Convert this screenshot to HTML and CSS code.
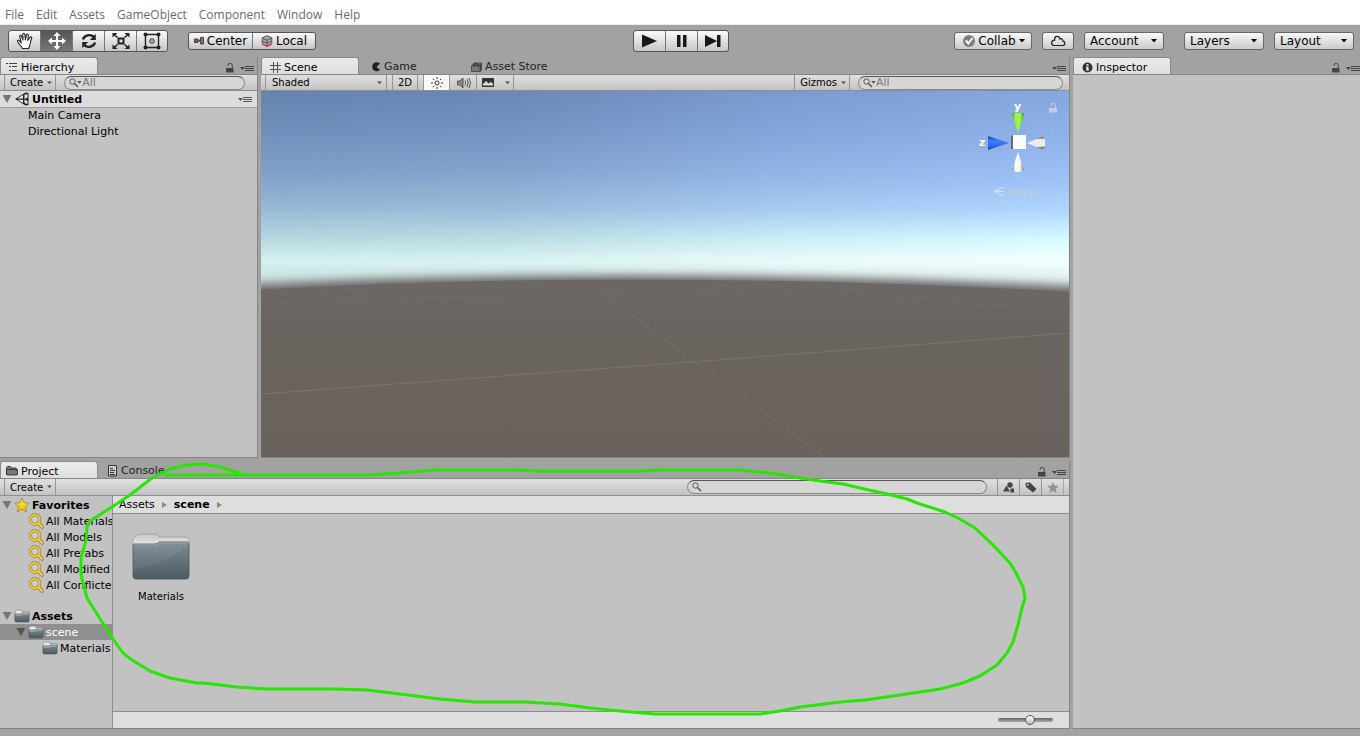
FILE: index.html
```html
<!DOCTYPE html>
<html lang="en">
<head>
    <meta charset="UTF-8">
    <meta name="viewport" content="width=device-width, initial-scale=1.0">
    <title>Untitled - Scene Editor</title>
    <link rel="stylesheet" href="styles.css">
</head>
<body>
    <!-- shared icons -->
    <svg class="sprite" width="0" height="0" aria-hidden="true">
        <defs>
            <linearGradient id="folderFront" x1="0" y1="0" x2="0" y2="1">
                <stop offset="0" stop-color="#7b8b92"/>
                <stop offset="1" stop-color="#4c5b62"/>
            </linearGradient>
            <linearGradient id="folderBack" x1="0" y1="0" x2="0" y2="1">
                <stop offset="0" stop-color="#c4c4c4"/>
                <stop offset="1" stop-color="#f2f2f2"/>
            </linearGradient>
            <linearGradient id="gold" x1="0" y1="0" x2="0" y2="1">
                <stop offset="0" stop-color="#fff04a"/>
                <stop offset="1" stop-color="#f5b70a"/>
            </linearGradient>
        </defs>
        <symbol id="lock" viewBox="0 0 8 10">
            <path d="M2 3V2.500a2 2 0 0 1 4.300 0V5" fill="none" stroke="currentColor"/>
            <path d="M0 5h7.500v4.500H0z" fill="currentColor"/>
        </symbol>
        <symbol id="menu" viewBox="0 0 14 7">
            <path d="M0 2h5L2.500 5z" fill="currentColor"/>
            <path d="M5 1.500h9M5 3.500h9M5 5.500h9" stroke="currentColor"/>
        </symbol>
        <symbol id="down" viewBox="0 0 6 4">
            <path d="M0 0h6L3 3.500z" fill="currentColor"/>
        </symbol>
        <symbol id="twisty" viewBox="0 0 10 8">
            <path d="M.5 0h9L5 8z" fill="currentColor"/>
        </symbol>
        <symbol id="find" viewBox="0 0 10 10">
            <circle cx="3.500" cy="3.500" r="2.700" fill="none" stroke="currentColor"/>
            <path d="M5.500 5.500L9 9" stroke="currentColor" stroke-width="1.500"/>
        </symbol>
        <symbol id="magnifier" viewBox="0 0 16 16">
            <circle cx="7" cy="6.500" r="4.700" fill="none" stroke="#8c7a3c" stroke-width="3"/>
            <path d="M10.500 10.500L14 14" stroke="#8c7a3c" stroke-width="3.600" stroke-linecap="round"/>
            <circle cx="7" cy="6.500" r="4.700" fill="none" stroke="#f9d62f" stroke-width="1.700"/>
            <path d="M10.500 10.500L14 14" stroke="#f9cf22" stroke-width="2.200" stroke-linecap="round"/>
            <circle cx="7" cy="6.500" r="3.500" fill="#cfcfcf" stroke="#8c7a3c" stroke-width=".6"/>
        </symbol>
        <symbol id="folder" viewBox="0 0 16 14">
            <path d="M1 12V3q0-1 .7-1L2.500 1H7l1 1.500h6q1 0 1 1V12z" fill="#e6e6e6" stroke="#777" stroke-width=".6"/>
            <path d="M1 5h6l1-1h7v8q0 1-1 1H2q-1 0-1-1z" fill="url(#folderFront)" stroke="#4c5960" stroke-width=".6"/>
            <path d="M1.500 6h6l1-1h6" fill="none" stroke="#c6ced2" stroke-width=".8"/>
        </symbol>
    </svg>

    <nav class="menu-bar">
        <a href="#">File</a>
        <a href="#">Edit</a>
        <a href="#">Assets</a>
        <a href="#">GameObject</a>
        <a href="#">Component</a>
        <a href="#">Window</a>
        <a href="#">Help</a>
    </nav>

    <header class="toolbar">
        <div class="toolbar-left">
            <div class="button-group tools">
                <button aria-label="Hand">
                    <svg width="18" height="18" viewBox="0 0 18 18" fill="#fff" stroke="#222" stroke-width="1.100" stroke-linejoin="round"><path d="M6.500 16.500C5 14 2.500 11.500 1.500 9.500c-.4-1.200 1-1.700 1.800-.8L5.300 11 3.700 4.500c-.3-1.400 1.400-1.800 1.800-.5L7 8 6.800 2.300c0-1.400 1.900-1.400 2 0L9.400 8l1-5c.3-1.300 2-1 1.900.3L11.800 8.500 14 5.300c.8-1 2.200-.2 1.700 1L14.500 10c-.5 3-1 4.500-2 6.500z"/></svg>
                </button>
                <button class="on" aria-label="Move">
                    <svg width="18" height="18" viewBox="0 0 18 18" fill="#fff"><path d="M9 0l3.500 4H10v4h4V5.500L18 9l-4 3.500V10h-4v4h2.500L9 18l-3.500-4H8v-4H4v2.500L0 9l4-3.500V8h4V4H5.500z"/></svg>
                </button>
                <button aria-label="Rotate">
                    <svg width="18" height="16" viewBox="0 0 18 16" fill="none" stroke="#222" stroke-width="2.400"><path d="M3 6.500C4 2 10.500.8 14 4M15 9.500C14 14 7.500 15.200 4 12"/><path d="M15.800 1v6h-6zM2.200 15V9h6z" fill="#222" stroke="none"/></svg>
                </button>
                <button aria-label="Scale">
                    <svg width="18" height="16" viewBox="0 0 18 16" fill="none" stroke="#222"><path d="M6.500 5.500h5v5h-5z" stroke-width="2"/><path d="M5.500 4.500L2 1.500M12.500 4.500L16 1.500M5.500 11.500L2 14.500M12.500 11.500L16 14.500" stroke-width="1.500"/><path d="M.5 0h5l-5 4.500zM17.500 0v4.500l-5-4.500zM.5 16v-4.500l5 4.500zM17.500 16h-5l5-4.500z" fill="#222" stroke="none"/></svg>
                </button>
                <button aria-label="Rect">
                    <svg width="18" height="18" viewBox="0 0 18 18" fill="none" stroke="#222"><path d="M2.500 2.500h13v13h-13z" stroke-width="1.400"/><circle cx="9" cy="9" r="2.300"/><circle cx="9" cy="9" r=".7" fill="#222" stroke="none"/><g fill="#222" stroke="none"><circle cx="2.500" cy="2.500" r="2"/><circle cx="15.500" cy="2.500" r="2"/><circle cx="2.500" cy="15.500" r="2"/><circle cx="15.500" cy="15.500" r="2"/></g></svg>
                </button>
            </div>
            <div class="button-group pivot">
                <button>
                    <svg width="10" height="8" viewBox="0 0 10 8"><path d="M.5 2h3.500v3.500H.5z" fill="#666" stroke="#444"/><path d="M6.500.5h3v6.500h-3z" fill="#777" stroke="#444"/><path d="M4 3.700h2" stroke="#c22" stroke-width="2"/></svg>
                    Center
                </button>
                <button>
                    <svg width="12" height="12" viewBox="0 0 12 12" stroke="#555"><path d="M6 .7l4.800 2.200v5.800L6 11.300 1.200 8.700V2.900z" fill="#aaa"/><path d="M1.200 3L6 5.300 10.800 3M6 5.300v6M1.200 6L6 8.300 10.800 6" fill="none"/><path d="M1.200 9L6 11.500 10.800 9" fill="none" stroke="#d23a4a" stroke-width="1.300"/></svg>
                    Local
                </button>
            </div>
        </div>

        <div class="button-group play">
            <button aria-label="Play"><svg width="15" height="14" viewBox="0 0 15 14"><path d="M0 .5L15 7 0 13.500z" fill="#181818"/></svg></button>
            <button aria-label="Pause"><svg width="10" height="14" viewBox="0 0 10 14"><path d="M0 1h3.500v12H0zM6 1h3.500v12H6z" fill="#181818"/></svg></button>
            <button aria-label="Step"><svg width="16" height="14" viewBox="0 0 16 14"><path d="M0 1l12 6L0 13zM12 1h3.500v12H12z" fill="#181818"/></svg></button>
        </div>

        <div class="toolbar-right">
            <button class="pill collab">
                <svg width="12" height="12" viewBox="0 0 12 12"><circle cx="6" cy="6" r="6" fill="#7d7d7d"/><path d="M2.800 5.500l2.500 3L9.500 3" fill="none" stroke="#fff" stroke-width="2"/></svg>
                Collab
                <svg width="6" height="4"><use href="#down"/></svg>
            </button>
            <button class="pill cloud" aria-label="Cloud">
                <svg width="16" height="12" viewBox="0 0 16 12" fill="none" stroke="#222" stroke-width="1.200"><path d="M4 10.500h8.500c3 0 3-4 .3-4.300C13 3.500 10.500 3.500 10 4 9-.2 3.800 1 4.700 5.200 1 5 .5 10 4 10.500z"/></svg>
            </button>
            <label class="drop"><select class="pill" aria-label="Account"><option>Account</option></select><svg width="6" height="4"><use href="#down"/></svg></label>
            <label class="drop layers"><select class="pill" aria-label="Layers"><option>Layers</option></select><svg width="6" height="4"><use href="#down"/></svg></label>
            <label class="drop"><select class="pill" aria-label="Layout"><option>Layout</option></select><svg width="6" height="4"><use href="#down"/></svg></label>
        </div>
    </header>

    <main class="workspace">
        <div class="docks">
            <div class="upper">
                <section class="panel hierarchy">
                    <div class="tabs">
                        <button class="tab active"><svg width="12" height="10" viewBox="0 0 12 10" stroke="#444"><path d="M0 1.500h2M3 1.500h8M3 4.500h2M6 4.500h5M3 8.500h2M6 8.500h5"/></svg>Hierarchy</button>
                        <span class="tab-tools"><svg width="8" height="10"><use href="#lock"/></svg><svg width="14" height="7"><use href="#menu"/></svg></span>
                    </div>
                    <div class="bar">
                        <button class="bar-button">Create <svg width="5" height="4" viewBox="0 0 6 4"><use href="#down"/></svg></button>
                        <label class="search grow"><svg width="10" height="10"><use href="#find"/></svg><svg width="5" height="3" viewBox="0 0 6 4"><use href="#down"/></svg><input type="text" placeholder="All" aria-label="Search hierarchy"></label>
                    </div>
                    <div class="scene-row">
                        <svg class="twisty" width="10" height="8"><use href="#twisty"/></svg>
                        <svg width="14" height="14" viewBox="0 0 14 14"><path d="M0 7L10.500.5 13.500 1v12l-3 .5z" fill="#222"/><path d="M2.500 6.200L8 3v3.500H3zM2.500 7.800h5.500V11zM9.500 2.800L12.500 2v3.500L9.500 7zM9.500 7.500l3 1.500v3l-3-1z" fill="#e4e4e4"/></svg>
                        <strong>Untitled</strong>
                        <svg class="row-menu" width="14" height="7"><use href="#menu"/></svg>
                    </div>
                    <ul class="objects">
                        <li>Main Camera</li>
                        <li>Directional Light</li>
                    </ul>
                </section>

                <section class="panel scene">
                    <div class="tabs">
                        <button class="tab active"><svg width="11" height="11" viewBox="0 0 11 11" stroke="#555"><path d="M3.500 0v11M7.500 0v11M0 3.500h11M0 7.500h11"/></svg>Scene</button>
                        <button class="tab"><svg width="10" height="10" viewBox="0 0 10 10"><path d="M9 1.500A4.600 4.600 0 1 0 9 8L5.500 5z" fill="#222"/></svg>Game</button>
                        <button class="tab"><svg width="11" height="10" viewBox="0 0 11 10"><path d="M1.500 3L3 1h7.500L9 3zM9.500 3l1-1.500V8l-1 1.500z" fill="#777" stroke="#333" stroke-width=".7"/><path d="M.5 3.500h8.500v6H.5z" fill="#777" stroke="#333" stroke-width=".7"/><path d="M3 5c0-5 4-5 4 0" fill="none" stroke="#333"/></svg>Asset Store</button>
                        <span class="tab-tools"><svg width="14" height="7"><use href="#menu"/></svg></span>
                    </div>
                    <div class="bar">
                        <label class="bar-select"><select aria-label="Draw mode"><option>Shaded</option></select><svg width="5" height="4" viewBox="0 0 6 4"><use href="#down"/></svg></label>
                        <button class="bar-button spaced">2D</button>
                        <button class="bar-button icon-button spaced lit" aria-label="Lighting"><svg width="12" height="12" viewBox="0 0 12 12" fill="none" stroke="#333"><circle cx="6" cy="6" r="2"/><path d="M6 0v2M6 10v2M0 6h2M10 6h2M1.800 1.800l1.300 1.300M8.900 8.900l1.300 1.300M1.800 10.200l1.300-1.300M8.900 3.100l1.300-1.300"/></svg></button>
                        <button class="bar-button icon-button joined" aria-label="Audio"><svg width="14" height="12" viewBox="0 0 14 12" fill="none" stroke="#555"><path d="M.5 4h2.300L6 1v10L2.800 8H.5z" fill="#888"/><path d="M8 3.500q1.500 2.500 0 5M10 2q2.500 4 0 8M12 1q3 5 0 10"/></svg></button>
                        <button class="bar-button effects joined" aria-label="Effects"><svg width="12" height="9" viewBox="0 0 12 9"><path d="M0 0h12v9H0z" fill="#333"/><path d="M1 7.500V6l3-3 2.500 2.500L9 4l2 2v1.500z" fill="#ddd"/></svg><svg class="split" width="5" height="4" viewBox="0 0 6 4"><use href="#down"/></svg></button>
                        <button class="bar-button gizmos">Gizmos <svg width="5" height="4" viewBox="0 0 6 4"><use href="#down"/></svg></button>
                        <label class="search medium"><svg width="10" height="10"><use href="#find"/></svg><svg width="5" height="3" viewBox="0 0 6 4"><use href="#down"/></svg><input type="text" placeholder="All" aria-label="Search scene"></label>
                    </div>
                    <div class="viewport">
                        <svg class="world" viewBox="0 0 808 366" preserveAspectRatio="none" aria-hidden="true">
                            <defs>
                                <linearGradient id="skyLeft" gradientUnits="userSpaceOnUse" x1="0" y1="0" x2="0" y2="200">
                                    <stop offset="0" stop-color="#6683af"/>
                                    <stop offset=".2" stop-color="#708fbb"/>
                                    <stop offset=".4" stop-color="#809fc8"/>
                                    <stop offset=".58" stop-color="#97b7d4"/>
                                    <stop offset=".73" stop-color="#b5d5e0"/>
                                    <stop offset=".85" stop-color="#d5f1f1"/>
                                    <stop offset="1" stop-color="#c4d8d6"/>
                                </linearGradient>
                                <linearGradient id="skyRight" gradientUnits="userSpaceOnUse" x1="0" y1="0" x2="0" y2="200">
                                    <stop offset="0" stop-color="#85a7e0"/>
                                    <stop offset=".25" stop-color="#90b3ec"/>
                                    <stop offset=".45" stop-color="#9ec3f6"/>
                                    <stop offset=".6" stop-color="#b0d6ff"/>
                                    <stop offset=".74" stop-color="#d6faff"/>
                                    <stop offset=".85" stop-color="#f4ffff"/>
                                    <stop offset="1" stop-color="#d0e4e2"/>
                                </linearGradient>
                                <linearGradient id="across">
                                    <stop offset="0" stop-color="#000"/>
                                    <stop offset=".3" stop-color="#222"/>
                                    <stop offset=".65" stop-color="#aaa"/>
                                    <stop offset="1" stop-color="#fff"/>
                                </linearGradient>
                                <linearGradient id="ground" x1="0" y1="0" x2="0" y2="1">
                                    <stop offset="0" stop-color="#6d6868"/>
                                    <stop offset=".25" stop-color="#6a645f"/>
                                    <stop offset="1" stop-color="#69605b"/>
                                </linearGradient>
                                <mask id="sunSide"><rect width="808" height="220" fill="url(#across)"/></mask>
                                <filter id="haze" x="-10%" y="-20%" width="120%" height="140%"><feGaussianBlur stdDeviation="0 5"/></filter>
                            </defs>
                            <rect width="808" height="220" fill="url(#skyLeft)"/>
                            <rect width="808" height="220" fill="url(#skyRight)" mask="url(#sunSide)"/>
                            <path d="M-40 195Q370 173 850 197V400H-40z" fill="#6d6868" filter="url(#haze)"/>
                            <path d="M-40 201Q370 175 850 203V400H-40z" fill="url(#ground)"/>
                            <g fill="none" stroke="#807c79" stroke-width="1">
                                <path d="M0 303L430 271 808 242" opacity=".65"/>
                                <path d="M346 205L432 269 563 366" opacity=".55"/>
                                <path d="M0 212L330 204 560 200M0 213L110 196M560 196L808 224" opacity=".25"/>
                            </g>
                        </svg>
                        <svg class="gizmo" width="78" height="104" viewBox="0 0 78 104" role="img" aria-label="View axes">
                            <defs>
                                <linearGradient id="coneGrey"><stop offset="0" stop-color="#888"/><stop offset=".3" stop-color="#fff"/><stop offset=".7" stop-color="#eee"/><stop offset="1" stop-color="#777"/></linearGradient>
                                <linearGradient id="coneGreen"><stop offset="0" stop-color="#4c9a10"/><stop offset=".3" stop-color="#9af54a"/><stop offset=".7" stop-color="#9af54a"/><stop offset="1" stop-color="#3f850b"/></linearGradient>
                                <linearGradient id="coneBlue" x1="0" y1="0" x2="0" y2="1"><stop offset="0" stop-color="#1b3f9e"/><stop offset=".35" stop-color="#3d7bff"/><stop offset=".7" stop-color="#316cf0"/><stop offset="1" stop-color="#173f9e"/></linearGradient>
                            </defs>
                            <path d="M33 13h12l-1 4-5 16-5-16z" fill="url(#coneGreen)"/>
                            <path d="M9 36v14l21-7z" fill="url(#coneBlue)"/>
                            <path d="M48 43L62 37l4 1v10l-4 1z" fill="#ececec"/>
                            <path d="M57 47l6 2.500 3-1.500v-1.500zM57 39l6-2.500 3 1.500v.8z" fill="#888"/>
                            <path d="M39 52l6 18q-6 4-12 0z" fill="url(#coneGrey)"/>
                            <path d="M32 36l2-1v14h-2z" fill="#667"/>
                            <path d="M34 35h13v14H34z" fill="#fafbff"/>
                            <path d="M25 87l-10 4.500L25 96M15 91.500h10" fill="none" stroke="#dde8fb" opacity=".8"/>
                            <g transform="translate(70 3)" fill="#c9ced8"><path d="M0 5h8v4.500H0z"/><path d="M2 3V2.500a2 2 0 0 1 4.300 0V5" fill="none" stroke="#c9ced8"/></g>
                            <text class="axis" x="35" y="10">y</text>
                            <text class="axis" x="0" y="46">z</text>
                            <text class="persp" x="28" y="96">Persp</text>
                        </svg>
                    </div>
                </section>
            </div>

            <section class="panel project">
                <div class="tabs">
                    <button class="tab active"><svg width="12" height="10" viewBox="0 0 12 10"><path d="M.5 9V2q0-1 1-1.500h3L5.500 2h4q1 0 1 1v1.500M.5 3.500h11V8q0 1-1 1h-9q-1 0-1-1z" fill="#777" stroke="#333" stroke-width=".9"/></svg>Project</button>
                    <button class="tab"><svg width="10" height="12" viewBox="0 0 10 12" fill="none" stroke="#333"><path d="M.5.5h8v10.500h-8z" fill="#ccc"/><path d="M2 3.500h3M2 5.500h5M2 7.500h4M2 9.500h5"/></svg>Console</button>
                    <span class="tab-tools"><svg width="8" height="10"><use href="#lock"/></svg><svg width="14" height="7"><use href="#menu"/></svg></span>
                </div>
                <div class="bar">
                    <button class="bar-button">Create <svg width="5" height="4" viewBox="0 0 6 4"><use href="#down"/></svg></button>
                    <label class="search wide"><svg width="10" height="10"><use href="#find"/></svg><input type="text" aria-label="Search assets"></label>
                    <div class="filters">
                        <button aria-label="Search by type"><svg width="12" height="11" viewBox="0 0 12 11" fill="#444"><path d="M3.500 3.500l3.500 6H0z"/><circle cx="7" cy="3" r="2.700"/><path d="M7.500 6.500H11v4H7.500z"/></svg></button>
                        <button aria-label="Search by label"><svg width="12" height="11" viewBox="0 0 12 11"><path d="M.5 1L5 .5 11.500 7 8 10.500 1 5z" fill="#444"/><circle cx="2.800" cy="2.800" r="1" fill="#ccc"/></svg></button>
                        <button aria-label="Save search"><svg width="12" height="11" viewBox="0 0 12 11"><path d="M6 0l1.600 3.700 4.100.4-3.100 2.700 1 4.100L6 8.800 2.400 10.900l1-4.100L.3 4.100l4.100-.4z" fill="#929292"/></svg></button>
                    </div>
                </div>
                <div class="project-body">
                    <ul class="tree">
                        <li class="root"><svg class="twisty" width="10" height="8"><use href="#twisty"/></svg><svg width="16" height="16" viewBox="0 0 16 16"><path d="M8 1l2.100 4.700 5.200.5-3.900 3.500 1.200 5.100L8 12.200l-4.600 2.600 1.200-5.100L.7 6.200l5.200-.5z" fill="url(#gold)" stroke="#9a8330" stroke-width=".8"/></svg>Favorites</li>
                        <li class="leaf"><svg width="16" height="16"><use href="#magnifier"/></svg>All Materials</li>
                        <li class="leaf"><svg width="16" height="16"><use href="#magnifier"/></svg>All Models</li>
                        <li class="leaf"><svg width="16" height="16"><use href="#magnifier"/></svg>All Prefabs</li>
                        <li class="leaf"><svg width="16" height="16"><use href="#magnifier"/></svg>All Modified</li>
                        <li class="leaf"><svg width="16" height="16"><use href="#magnifier"/></svg>All Conflicted</li>
                        <li class="root second"><svg class="twisty" width="10" height="8"><use href="#twisty"/></svg><svg width="16" height="14"><use href="#folder"/></svg>Assets</li>
                        <li class="child selected"><svg class="twisty" width="10" height="8"><use href="#twisty"/></svg><svg width="16" height="14"><use href="#folder"/></svg>scene</li>
                        <li class="grandchild"><svg width="16" height="14"><use href="#folder"/></svg>Materials</li>
                    </ul>
                    <div class="browser">
                        <div class="breadcrumb">
                            <a href="#">Assets</a>
                            <svg width="5" height="6" viewBox="0 0 5 6"><path d="M0 0l5 3-5 3z" fill="#888"/></svg>
                            <a href="#"><strong>scene</strong></a>
                            <svg width="5" height="6" viewBox="0 0 5 6"><path d="M0 0l5 3-5 3z" fill="#888"/></svg>
                        </div>
                        <div class="assets">
                            <figure>
                                <svg width="58" height="48" viewBox="0 0 58 48"><path d="M1 14V7q0-2 2-3l2-2q1-1 3-1h14q2 0 3 1l2 2h27q3 0 3 3v8z" fill="url(#folderBack)" stroke="#999" stroke-width=".7"/><path d="M1 12q0-1 2-1h20q3 0 4-2h28q2 0 2 2v32q0 3-3 3H4q-3 0-3-3z" fill="url(#folderFront)" stroke="#46545b" stroke-width=".8"/><path d="M1 37Q34 30 57 12V9H28l-4 2H1z" fill="#fff" opacity=".06"/><path d="M2 12h21q3 0 4-2h29" fill="none" stroke="#97a5ab"/></svg>
                                <figcaption>Materials</figcaption>
                            </figure>
                        </div>
                        <div class="size-bar"><input type="range" min="0" max="100" value="60" aria-label="Icon size"></div>
                    </div>
                </div>
            </section>
        </div>

        <section class="panel inspector">
            <div class="tabs">
                <button class="tab active"><svg width="11" height="11" viewBox="0 0 11 11"><circle cx="5.500" cy="5.500" r="5" fill="#333"/><path d="M4.500 2h2v1.500h-2zM4 4.500h2.500v3H7v1H4v-1h.500v-2H4z" fill="#eee"/></svg>Inspector</button>
                <span class="tab-tools"><svg width="8" height="10"><use href="#lock"/></svg><svg width="14" height="7"><use href="#menu"/></svg></span>
            </div>
            <div class="inspector-body"></div>
        </section>
    </main>

    <!-- hand-drawn marker around the asset browser -->
    <svg class="marker" viewBox="0 0 1360 736" preserveAspectRatio="none" aria-hidden="true">
        <path d="M240 473L220 467 203 464 187 465 170 469 152 478 130 495 115 505 90 521 87 527 86 540 81 558 81 575 87 598 97 614 113 639 123 653 132 660 150 671 170 678 197 683 203 683 237 687 267 689 333 689 367 690 400 694 440 699 475 702 525 702 560 704 590 708 620 711 655 714 760 714 780 711 800 707 840 702 865 700 900 695 940 689 963 683 980 676 997 665 1007 653 1013 642 1018 625 1022 608 1025 598 1023 587 1016 573 1010 563 993 545 975 528 958 518 945 512 917 503 907 499 887 494 860 488 843 484 820 481 800 478 770 473 740 470 660 470 640 471 540 471 515 470 435 470 400 473 370 475 166 475"/>
    </svg>
</body>
</html>
```
FILE: styles.css
```css
* {
    box-sizing: border-box;
}
body {
    margin: 0;
    min-height: 100vh;
    display: flex;
    flex-direction: column;
    background-color: #a2a2a2;
    color: #000;
    font-family: "DejaVu Sans", Verdana, sans-serif;
    font-size: 11px;
}
button, select, input {
    margin: 0;
    padding: 0;
    border: none;
    border-radius: 0;
    background: none;
    color: inherit;
    font: inherit;
    appearance: none;
}
input:focus {
    outline: none;
}
svg {
    display: block;
    flex: none;
}
ul {
    list-style: none;
    margin: 0;
    padding: 0;
}
.sprite {
    position: absolute;
}

/* application menu */
.menu-bar {
    display: flex;
    gap: 12px;
    height: 25px;
    padding: 6px 5px 0;
    background-color: #fff;
    border-bottom: 1px solid #ececec;
    font-family: "Open Sans", "Noto Sans", sans-serif;
    font-size: 12px;
    line-height: 18px;
}
.menu-bar a {
    color: #6a6a6a;
    text-decoration: none;
}

/* main toolbar */
.toolbar {
    display: grid;
    grid-template-columns: 1fr auto 1fr;
    align-items: center;
    height: 32px;
    padding: 0 6px 0 8px;
}
.toolbar-left {
    display: flex;
    align-items: center;
    gap: 20px;
}
.toolbar-right {
    display: flex;
    align-items: center;
    justify-content: flex-end;
    gap: 10px;
}
.button-group {
    display: flex;
    border: 1px solid #555;
    border-radius: 3px;
    background: linear-gradient(#fafafa, #c6c6c6);
    overflow: hidden;
}
.button-group button {
    display: flex;
    align-items: center;
    justify-content: center;
    gap: 3px;
    width: 32px;
    height: 20px;
}
.button-group button:first-child,
.button-group button:last-child {
    width: 31px;
}
.button-group button + button {
    border-left: 1px solid #777;
}
.button-group button.on {
    background: linear-gradient(#555, #777);
}
.pivot {
    font-size: 12px;
}
.pivot button:first-child,
.pivot button:last-child {
    width: 63px;
    height: 16px;
}
.pill {
    display: flex;
    align-items: center;
    height: 18px;
    border: 1px solid #666;
    border-radius: 3px;
    background: linear-gradient(#f8f8f8, #cacaca);
    font-size: 12px;
}
.collab {
    justify-content: space-between;
    width: 78px;
    padding: 0 6px 0 8px;
}
.cloud {
    justify-content: center;
    width: 32px;
}
.drop {
    display: grid;
    align-items: center;
}
.drop select {
    width: 80px;
    padding: 0 5px;
}
.drop > * {
    grid-area: 1 / 1;
}
.drop svg {
    justify-self: end;
    margin-right: 7px;
    pointer-events: none;
}
.layers {
    margin-left: 10px;
}

/* docked panels */
.workspace {
    flex: 1;
    display: grid;
    grid-template-columns: 1070fr 287fr;
    gap: 3px;
    padding-bottom: 7px;
}
.docks {
    display: grid;
    grid-template-columns: minmax(0, 1fr);
    grid-template-rows: 401fr 268fr;
    gap: 3px;
}
.upper {
    display: grid;
    grid-template-columns: 258fr 809fr;
    gap: 3px;
}
.panel {
    display: flex;
    flex-direction: column;
    min-width: 0;
    border-right: 1px solid #848484;
    border-bottom: 1px solid #848484;
}
.tabs {
    display: flex;
    height: 17px;
}
.tab {
    display: flex;
    align-items: center;
    gap: 3px;
    min-width: 98px;
    padding: 2px 10px 0;
    color: #222;
}
.tab.active {
    padding: 2px 5px 0;
    border: 1px solid #8a8a8a;
    border-bottom: none;
    border-radius: 3px 3px 0 0;
    background: linear-gradient(#ebebeb, #dedede);
    color: #000;
}
.scene .tab.active,
.inspector .tab.active {
    padding: 2px 8px 0;
}
.scene .tabs {
    gap: 2px;
}
.tab-tools {
    display: flex;
    align-items: center;
    gap: 6px;
    margin-left: auto;
    padding: 5px 3px 0 0;
    color: #444;
}
.bar {
    display: flex;
    align-items: center;
    height: 17px;
    padding-left: 4px;
    border-top: 1px solid #858585;
    border-bottom: 1px solid #8e8e8e;
    background: linear-gradient(#e0e0e0, #c2c2c2);
    font-size: 10px;
}
.project .bar {
    height: 18px;
}
.bar-button {
    display: flex;
    align-items: center;
    justify-content: center;
    gap: 4px;
    height: 100%;
    padding: 0 3px 0 5px;
    border-left: 1px solid #949494;
    border-right: 1px solid #949494;
}
.bar svg {
    color: #555;
}
.spaced {
    margin-left: 5px;
    padding: 0 5px;
}
.icon-button {
    width: 27px;
}
.joined {
    border-left: none;
}
.lit {
    background-color: #fafafa;
}
.effects {
    gap: 11px;
}
.gizmos {
    margin-left: auto;
}
.bar-select {
    display: grid;
    align-items: center;
    width: 122px;
    height: 100%;
    border-left: 1px solid #949494;
    border-right: 1px solid #949494;
}
.bar-select > * {
    grid-area: 1 / 1;
}
.bar-select select {
    padding-left: 6px;
}
.bar-select svg {
    justify-self: end;
    margin-right: 4px;
    pointer-events: none;
}
.search {
    display: flex;
    align-items: center;
    height: 14px;
    margin: 0 6px 0 8px;
    padding: 0 4px;
    border: 1px solid #8a8a8a;
    border-top-color: #555;
    border-radius: 7px;
    background-color: #d6d6d6;
}
.search svg + svg {
    margin-left: -2px;
}
.search input {
    flex: 1;
    min-width: 0;
    height: 12px;
    font-size: 11px;
}
.search input::placeholder {
    color: #777;
    opacity: 1;
}
.grow {
    flex: 1;
    min-width: 0;
    margin-right: 12px;
}
.medium {
    width: 205px;
}
.wide {
    width: 300px;
    margin: 0 10px 0 auto;
}
.filters {
    display: flex;
    margin-right: 5px;
    border-right: 1px solid #a8a8a8;
}
.filters button {
    display: flex;
    align-items: center;
    justify-content: center;
    width: 22px;
    height: 16px;
    border-left: 1px solid #949494;
}

/* hierarchy */
.hierarchy, .inspector {
    background-color: #c2c2c2;
}
.panel .tabs {
    background-color: #a2a2a2;
}
.scene-row {
    display: flex;
    align-items: center;
    gap: 3px;
    height: 17px;
    padding: 0 5px 0 2px;
    border-bottom: 1px solid #9a9a9a;
    background-color: #dcdcdc;
}
.row-menu {
    margin-left: auto;
    color: #555;
}
.twisty {
    color: #777;
}
.objects li {
    height: 16px;
    padding-left: 28px;
    line-height: 16px;
}

/* scene view */
.viewport {
    position: relative;
    flex: 1;
}
.world {
    position: absolute;
    width: 100%;
    height: 100%;
}
.gizmo {
    position: absolute;
    top: 9px;
    right: 12px;
}
.axis {
    fill: #fff;
    font-size: 11px;
    font-weight: bold;
}
.persp {
    fill: #c9cbd0;
    font-size: 10px;
}

/* project browser */
.project-body {
    flex: 1;
    display: grid;
    grid-template-columns: 113px 1fr;
    background-color: #c2c2c2;
}
.tree {
    padding-top: 1px;
    border-right: 1px solid #8e8e8e;
    overflow: hidden;
}
.tree li {
    display: flex;
    align-items: center;
    gap: 2px;
    height: 16px;
    white-space: nowrap;
}
.tree .root {
    padding-left: 2px;
    font-weight: bold;
}
.tree .leaf {
    padding-left: 28px;
}
.tree .child {
    padding-left: 16px;
}
.tree .grandchild {
    padding-left: 42px;
}
.tree .second {
    margin-top: 15px;
}
.tree .selected {
    background-color: #8f8f8f;
    color: #fff;
}
.selected .twisty {
    color: #555;
}
.browser {
    display: flex;
    flex-direction: column;
}
.breadcrumb {
    display: flex;
    align-items: center;
    gap: 7px;
    height: 18px;
    padding-left: 6px;
    border-bottom: 1px solid #8e8e8e;
    background-color: #dedede;
}
.breadcrumb a {
    color: #000;
    text-decoration: none;
}
.assets {
    flex: 1;
    padding: 19px;
}
.assets figure {
    display: flex;
    flex-direction: column;
    align-items: center;
    gap: 10px;
    width: 58px;
    margin: 0;
    font-size: 10px;
}
.size-bar {
    display: flex;
    align-items: center;
    justify-content: flex-end;
    height: 17px;
    padding-right: 16px;
    border-top: 1px solid #8e8e8e;
    background-color: #dedede;
}
.size-bar input {
    width: 55px;
    height: 4px;
    border-radius: 2px;
    background: linear-gradient(#666, #aaa);
}
.size-bar input::-webkit-slider-thumb {
    width: 10px;
    height: 10px;
    border: 1px solid #555;
    border-radius: 50%;
    background: linear-gradient(#fff, #bbb);
    appearance: none;
}

/* inspector */
.inspector {
    border-right: none;
}
.inspector .tab-tools {
    padding-right: 0;
}
.inspector-body {
    flex: 1;
    border-top: 1px solid #858585;
}

.marker {
    position: absolute;
    top: 0;
    left: 0;
    width: 100%;
    height: 100%;
    pointer-events: none;
}
.marker path {
    fill: none;
    stroke: #28e600;
    stroke-width: 3;
    stroke-linejoin: round;
    stroke-linecap: round;
}
```
